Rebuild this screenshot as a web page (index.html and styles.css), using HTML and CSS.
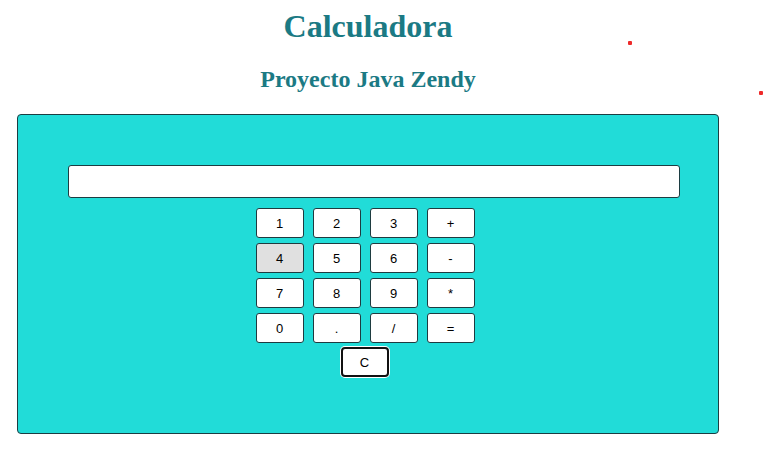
FILE: index.html
```html
<!DOCTYPE html>
<html lang="es">
<head>
<meta charset="utf-8">
<title>Calculadora</title>
<link rel="stylesheet" href="styles.css">
</head>
<body>
<span class="dot dot-a"></span>
<span class="dot dot-b"></span>
<main class="page">
  <h1 class="title">Calculadora</h1>
  <h2 class="subtitle">Proyecto Java Zendy</h2>
  <section class="calc">
    <input class="display" type="text" value="">
    <div class="keys">
      <button class="key">1</button>
      <button class="key">2</button>
      <button class="key">3</button>
      <button class="key">+</button>
      <button class="key key-hover">4</button>
      <button class="key">5</button>
      <button class="key">6</button>
      <button class="key">-</button>
      <button class="key">7</button>
      <button class="key">8</button>
      <button class="key">9</button>
      <button class="key">*</button>
      <button class="key">0</button>
      <button class="key">.</button>
      <button class="key">/</button>
      <button class="key">=</button>
    </div>
    <div class="clear-row">
      <button class="key key-focus">C</button>
    </div>
  </section>
</main>
</body>
</html>
```

FILE: styles.css
```css
html, body {
  margin: 0;
  padding: 0;
  background: #ffffff;
}

body {
  position: relative;
  width: 763px;
  height: 449px;
  overflow: hidden;
  font-family: "Liberation Serif", "Times New Roman", serif;
}

.dot {
  position: absolute;
  width: 4px;
  height: 4px;
  border-radius: 1px;
  background: #ee2a2a;
}

.dot-a { left: 628px; top: 41px; }
.dot-b { left: 759px; top: 91px; }

.page {
  display: flex;
  flex-direction: column;
  width: 702px;
  margin-left: 17px;
}

.title {
  margin: 8px 0 0;
  font-size: 32px;
  font-weight: bold;
  line-height: 37px;
  text-align: center;
  color: #1b7a84;
}

.subtitle {
  margin: 20px 0 0;
  font-size: 24px;
  font-weight: bold;
  line-height: 28px;
  text-align: center;
  color: #1b7a84;
}

.calc {
  box-sizing: border-box;
  margin-top: 21px;
  width: 702px;
  height: 320px;
  background: #21dcd8;
  border: 1px solid #1c3d42;
  border-radius: 4px;
  padding: 50px 0 0 50px;
  display: flex;
  flex-direction: column;
}

.display {
  box-sizing: border-box;
  width: 612px;
  height: 33px;
  margin: 0;
  padding: 0 6px;
  background: #ffffff;
  border: 1px solid #1c3d42;
  border-radius: 3px;
  outline: none;
}

.keys {
  margin: 10px 0 0 188px;
  display: grid;
  grid-template-columns: repeat(4, 48px);
  grid-auto-rows: 30px;
  column-gap: 9px;
  row-gap: 5px;
}

.key {
  box-sizing: border-box;
  width: 48px;
  height: 30px;
  margin: 0;
  padding: 0 1px 0 0;
  background: #ffffff;
  border: 1px solid #1e3b40;
  border-radius: 3px;
  font-family: "Liberation Sans", Arial, sans-serif;
  font-size: 13px;
  color: #000000;
}

.key-hover {
  background: #e0e0e0;
}

.clear-row {
  margin: 4px 0 0 273px;
  display: flex;
}

.key-focus {
  border: 2px solid #111111;
  border-radius: 4px;
  box-shadow: 0 0 0 1px #ffffff;
}
```
